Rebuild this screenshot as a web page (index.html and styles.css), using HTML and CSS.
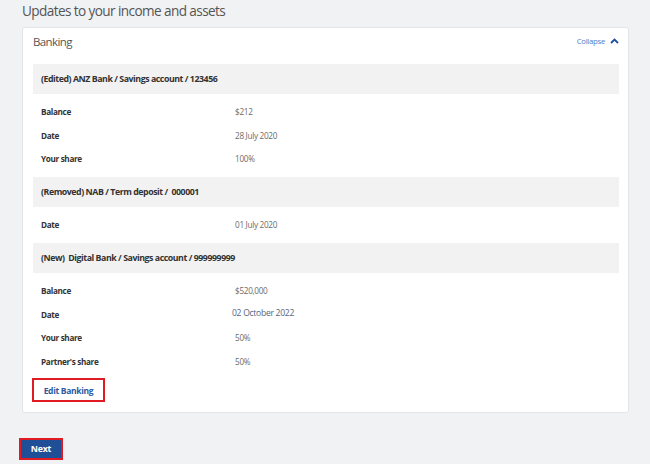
FILE: index.html
```html
<!DOCTYPE html>
<html>
<head>
<meta charset="utf-8">
<link rel="stylesheet" href="styles.css">
</head>
<body>
<div class="page">
  <h1 class="title">Updates to your income and assets</h1>
  <section class="card">
    <div class="card-head">
      <h2 class="card-title">Banking</h2>
      <a class="collapse">Collapse
        <svg class="chev" width="9" height="6" viewBox="0 0 9 6"><path d="M1 5 L4.5 1.5 L8 5" fill="none" stroke="#1d4fa0" stroke-width="1.8"/></svg>
      </a>
    </div>

    <div class="group-head">(Edited) ANZ Bank / Savings account / 123456</div>
    <div class="rows">
      <div class="row"><span class="label">Balance</span><span class="value">$212</span></div>
      <div class="row"><span class="label">Date</span><span class="value">28 July 2020</span></div>
      <div class="row"><span class="label">Your share</span><span class="value">100%</span></div>
    </div>

    <div class="group-head">(Removed) NAB / Term deposit / &nbsp;000001</div>
    <div class="rows">
      <div class="row"><span class="label">Date</span><span class="value">01 July 2020</span></div>
    </div>

    <div class="group-head">(New) &nbsp;Digital Bank / Savings account / 999999999</div>
    <div class="rows last">
      <div class="row"><span class="label">Balance</span><span class="value">$520,000</span></div>
      <div class="row"><span class="label">Date</span><span class="value alt">02 October 2022</span></div>
      <div class="row"><span class="label">Your share</span><span class="value">50%</span></div>
      <div class="row"><span class="label">Partner's share</span><span class="value">50%</span></div>
    </div>

    <button class="edit-btn">Edit Banking</button>
  </section>

  <button class="next-btn">Next</button>
</div>
</body>
</html>
```

FILE: styles.css
```css
* { box-sizing: border-box; }
html, body {
  margin: 0;
  padding: 0;
  background: #f1f2f4;
  font-family: "Open Sans", "Liberation Sans", sans-serif;
}
.page {
  padding: 0 21px 0 22px;
}
.title {
  margin: 0;
  padding-top: 1px;
  height: 27px;
  font-size: 13.6px;
  letter-spacing: -0.6px;
  font-weight: 400;
  color: #555;
  line-height: 20px;
}
.card {
  background: #fff;
  border: 1px solid #e3e4e6;
  border-radius: 3px;
  padding: 0 9px 10px 10px;
  display: flex;
  flex-direction: column;
}
.card-head {
  display: flex;
  justify-content: space-between;
  align-items: flex-start;
  height: 36px;
  padding-top: 5px;
}
.card-title {
  margin: 0;
  font-size: 11.5px;
  letter-spacing: -0.6px;
  font-weight: 400;
  color: #555;
  line-height: 18px;
}
.collapse {
  font-size: 7.8px;
  letter-spacing: -0.3px;
  line-height: 14px;
  color: #4f7cc9;
  display: flex;
  align-items: center;
  gap: 5px;
  padding-top: 1px;
}
.chev { display: block; }
.group-head {
  background: #f2f2f2;
  height: 30px;
  display: flex;
  align-items: center;
  padding-left: 8px;
  font-size: 8.8px;
  letter-spacing: -0.45px;
  font-weight: 700;
  color: #333;
}
.rows {
  padding: 6px 0 6.5px;
}
.rows.last { padding-bottom: 5px; }
.row {
  display: flex;
  height: 23.5px;
  align-items: center;
  padding-left: 8px;
}
.label {
  width: 194px;
  font-size: 8.2px;
  letter-spacing: -0.35px;
  font-weight: 700;
  color: #333;
}
.value {
  font-size: 8.2px;
  letter-spacing: -0.3px;
  color: #6b6b6b;
}
.value.alt {
  color: #55657f;
  margin-left: -3px;
  margin-top: -3px;
  font-size: 8.6px;
}
.edit-btn {
  align-self: flex-start;
  margin-left: -1px;
  width: 73px;
  height: 24px;
  background: #fff;
  border: 2px solid #e01b24;
  font-family: inherit;
  font-size: 8.5px;
  letter-spacing: -0.3px;
  font-weight: 700;
  color: #2c5aa0;
  padding: 0;
}
.next-btn {
  display: block;
  margin: 25px 0 0 -3px;
  width: 44px;
  height: 22px;
  background: #1f4f96;
  border: 2px solid #e01b24;
  color: #fff;
  font-family: inherit;
  font-size: 8.8px;
  letter-spacing: -0.2px;
  font-weight: 700;
  padding: 0;
}
```
